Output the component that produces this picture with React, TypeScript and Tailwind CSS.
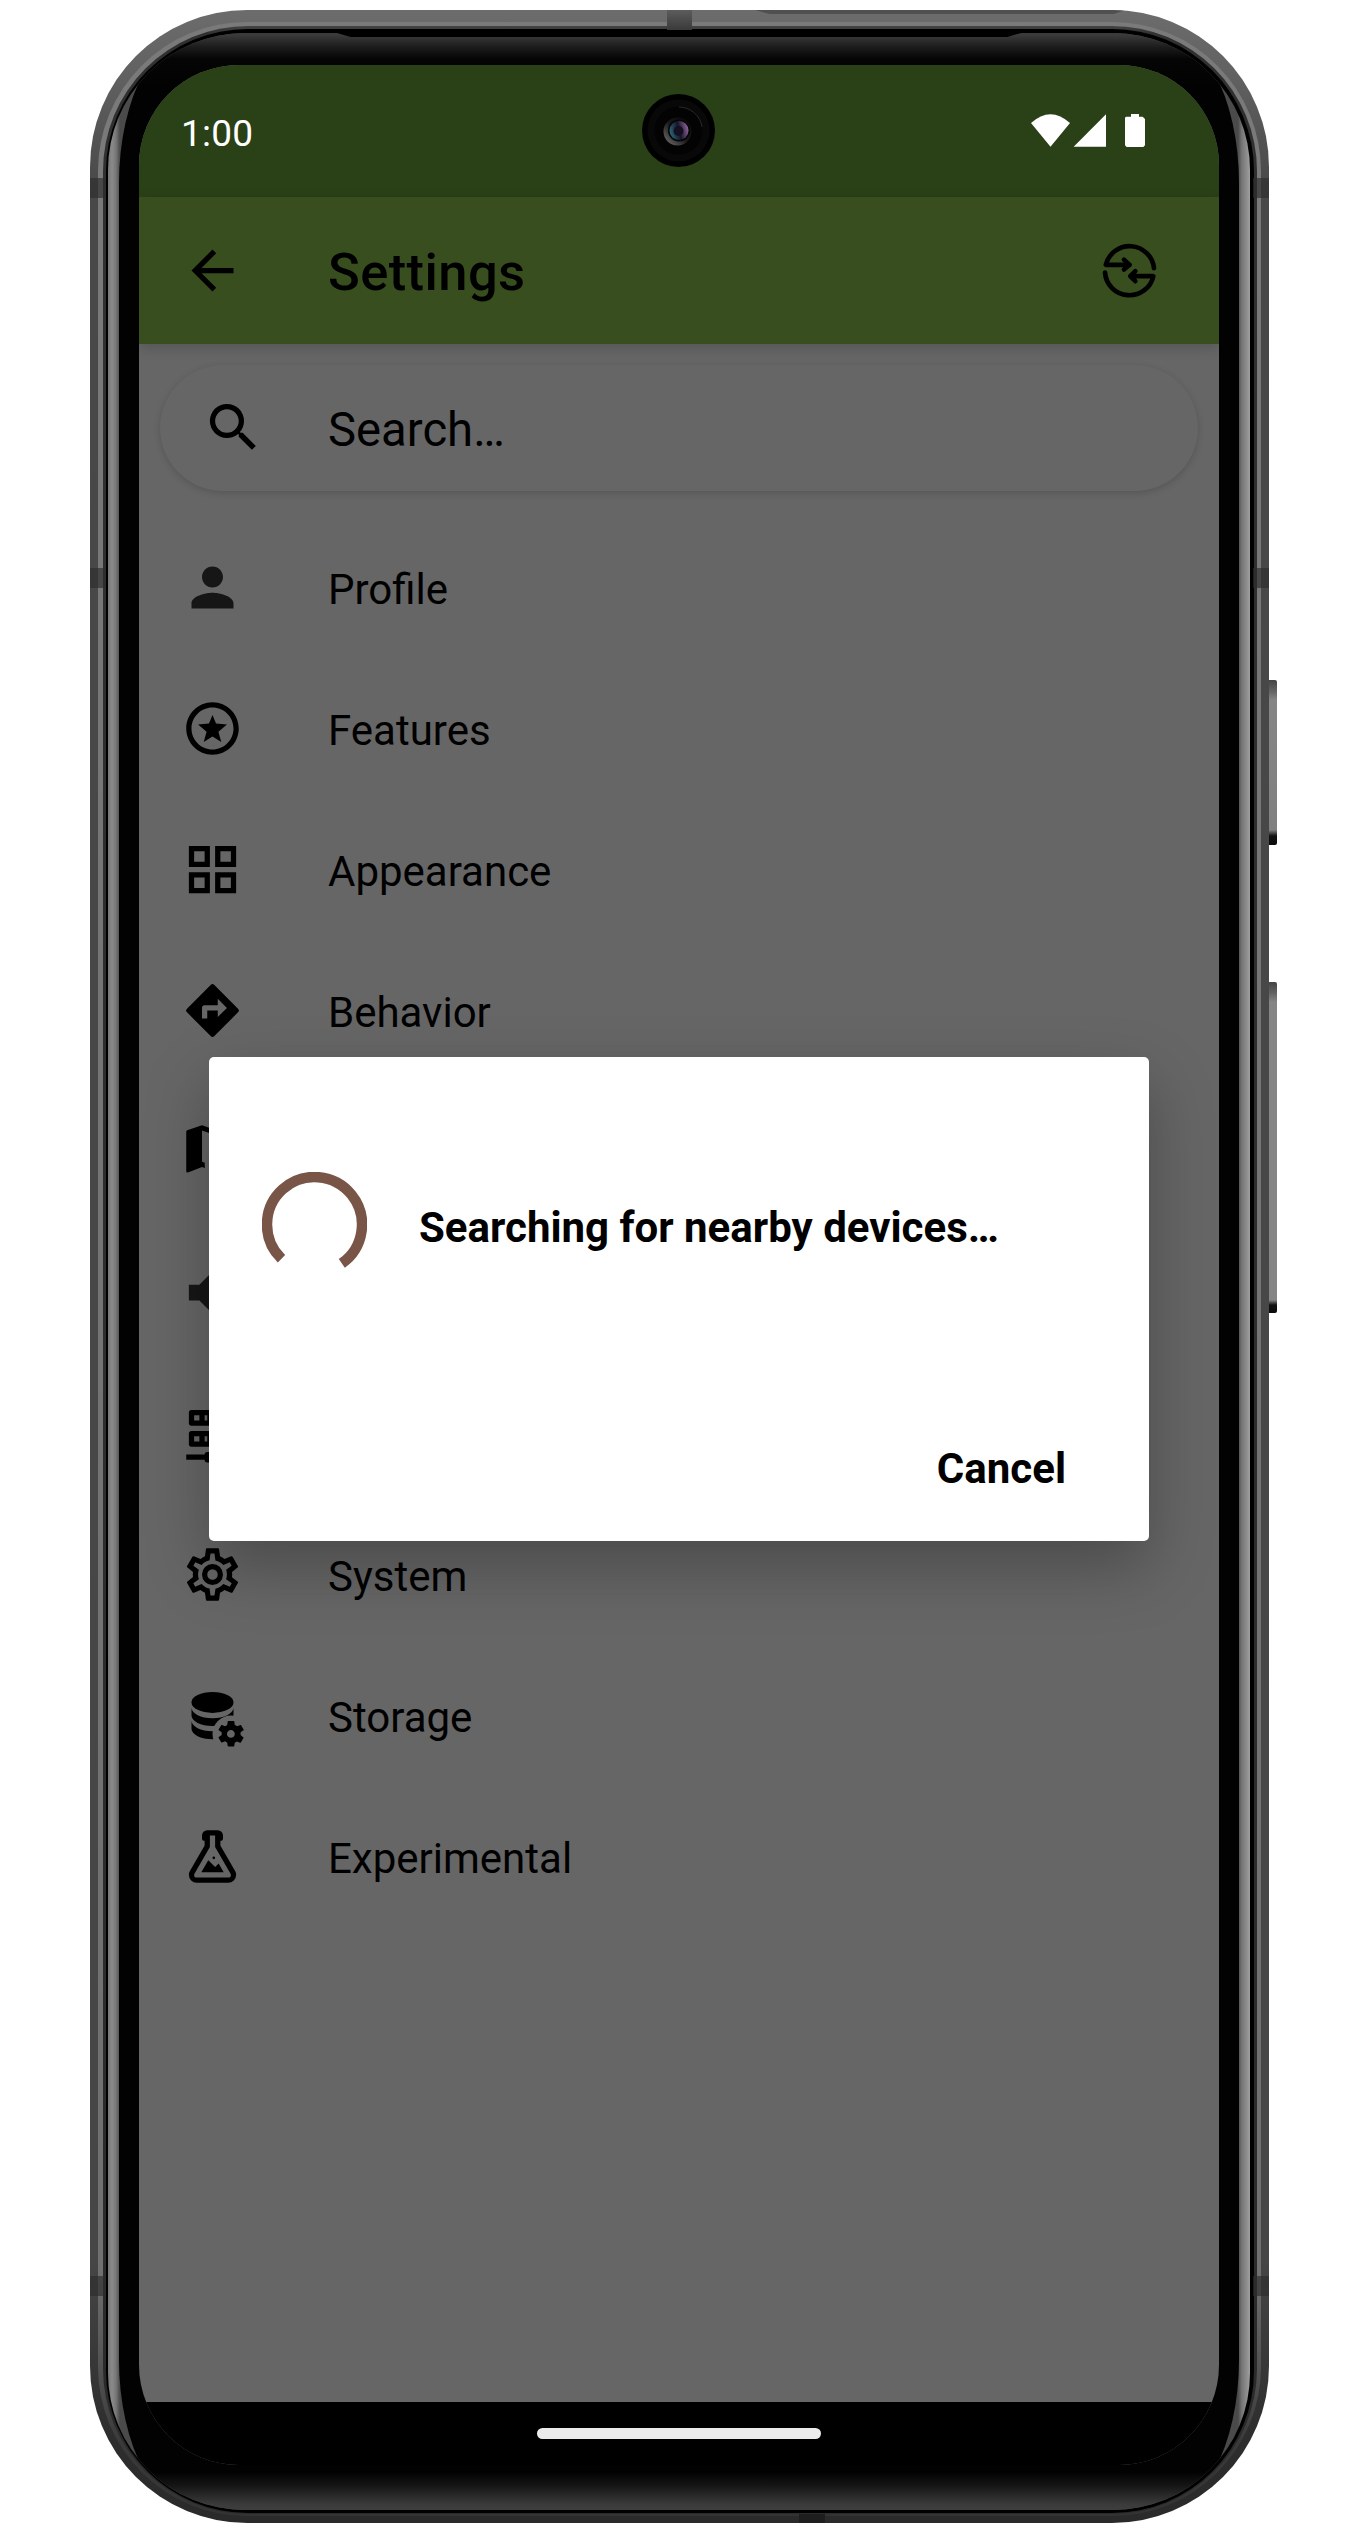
import type { ReactNode } from 'react';
import { MdArrowBack, MdSearch } from 'react-icons/md';

const PERSON = 'M12 12c2.21 0 4-1.79 4-4s-1.79-4-4-4-4 1.79-4 4 1.79 4 4 4zm0 2c-2.67 0-8 1.34-8 4v2h16v-2c0-2.66-5.33-4-8-4z';
const STARS = 'M12 2C6.47 2 2 6.48 2 12s4.47 10 9.99 10C17.52 22 22 17.52 22 12S17.52 2 12 2zm0 18c-4.42 0-8-3.58-8-8s3.58-8 8-8 8 3.58 8 8-3.58 8-8 8zM12 6.900L13.350 10.100L17.500 10.450L14.250 13.200L15.350 17.150L12 15.050L8.650 17.150L9.750 13.200L6.500 10.450L10.650 10.100Z';
const GRID = 'M3 3v8h8V3H3zm6 6H5V5h4v4zM3 13v8h8v-8H3zm6 6H5v-4h4v4zM13 3v8h8V3h-8zm6 6h-4V5h4v4zM13 13v8h8v-8h-8zm6 6h-4v-4h4v4z';
const DIRECTIONS = 'M14 14.5V12h-4v3H8v-4a1 1 0 0 1 1-1h5V7.5l3.5 3.5M21.71 11.29l-9-9a1 1 0 0 0-1.42 0l-9 9a1 1 0 0 0 0 1.42l9 9a1 1 0 0 0 1.42 0l9-9a1 1 0 0 0 0-1.42z';
const MAP = 'M8 2L2.36 3.9C2.15 3.97 2 4.15 2 4.38V19.5a.5.5 0 0 0 .5.5l.16-.03L8 17.9l1.15.4c-.1-.6-.12-1.2-.1-2L8 15.89V4l6 2.11V9l2-.3V5.9l2-.78V8.7h2V2.5a.5.5 0 0 0-.5-.5l-.16.03L14 4.1z';
const SPEAKER = 'M3 9v6h4l5 5V4L7 9H3zm13.5 3A4.5 4.5 0 0 0 14 7.97v8.05c1.48-.73 2.5-2.25 2.5-4.02z';
const SERVER = 'M13 19h1a1 1 0 0 1 1 1h7v2h-7a1 1 0 0 1-1 1h-4a1 1 0 0 1-1-1H2v-2h7a1 1 0 0 1 1-1h1v-2H4a1 1 0 0 1-1-1v-4a1 1 0 0 1 1-1h16a1 1 0 0 1 1 1v4a1 1 0 0 1-1 1h-7v2M4 3h16a1 1 0 0 1 1 1v4a1 1 0 0 1-1 1H4a1 1 0 0 1-1-1V4a1 1 0 0 1 1-1m5 4h1V5H9v2m0 8h1v-2H9v2M5 5v2h2V5H5m0 8v2h2v-2H5z';
const COG = 'M12 8A4 4 0 0 1 16 12A4 4 0 0 1 12 16A4 4 0 0 1 8 12A4 4 0 0 1 12 8M12 10A2 2 0 0 0 10 12A2 2 0 0 0 12 14A2 2 0 0 0 14 12A2 2 0 0 0 12 10M10 22C9.75 22 9.54 21.82 9.5 21.58L9.13 18.93C8.5 18.68 7.96 18.34 7.44 17.94L4.95 18.95C4.73 19.03 4.46 18.95 4.34 18.73L2.34 15.27C2.21 15.05 2.27 14.78 2.46 14.63L4.57 12.97L4.5 12L4.57 11L2.46 9.37C2.27 9.22 2.21 8.95 2.34 8.73L4.34 5.27C4.46 5.05 4.73 4.96 4.95 5.05L7.44 6.05C7.96 5.66 8.5 5.32 9.13 5.07L9.5 2.42C9.54 2.18 9.75 2 10 2H14C14.25 2 14.46 2.18 14.5 2.42L14.87 5.07C15.5 5.32 16.04 5.66 16.56 6.05L19.05 5.05C19.27 4.96 19.54 5.05 19.66 5.27L21.66 8.73C21.79 8.95 21.73 9.22 21.54 9.37L19.43 11L19.5 12L19.43 13L21.54 14.63C21.73 14.78 21.79 15.05 21.66 15.27L19.66 18.73C19.54 18.95 19.27 19.04 19.05 18.95L16.56 17.95C16.04 18.34 15.5 18.68 14.87 18.93L14.5 21.58C14.46 21.82 14.25 22 14 22H10M11.25 4L10.88 6.61C9.68 6.86 8.62 7.5 7.85 8.39L5.44 7.35L4.69 8.65L6.8 10.2C6.4 11.37 6.4 12.64 6.8 13.8L4.68 15.36L5.43 16.66L7.86 15.62C8.63 16.5 9.68 17.14 10.87 17.38L11.24 20H12.76L13.13 17.39C14.32 17.14 15.37 16.5 16.14 15.62L18.57 16.66L19.32 15.36L17.2 13.81C17.6 12.64 17.6 11.37 17.2 10.2L19.31 8.65L18.56 7.35L16.15 8.39C15.38 7.5 14.32 6.86 13.12 6.62L12.75 4H11.25Z';
const SMALL_COG = 'M23.8 20.4C23.9 20.4 23.9 20.5 23.8 20.6L22.8 22.3C22.7 22.4 22.6 22.4 22.5 22.4L21.3 21.9C21 22.1 20.8 22.2 20.5 22.3L20.3 23.6C20.3 23.7 20.2 23.8 20.1 23.8H18.1C18 23.8 17.9 23.7 17.8 23.6L17.6 22.3C17.3 22.2 17 22 16.8 21.8L15.6 22.3C15.5 22.3 15.4 22.3 15.3 22.2L14.3 20.5C14.3 20.4 14.3 20.3 14.4 20.2L15.5 19.4V18.4L14.4 17.6C14.3 17.6 14.3 17.5 14.3 17.4L15.3 15.7C15.4 15.6 15.5 15.6 15.6 15.6L16.8 16.1C17 15.9 17.3 15.8 17.6 15.6L17.8 14.3C17.8 14.2 17.9 14.1 18.1 14.1H20.1C20.2 14.1 20.3 14.2 20.3 14.3L20.5 15.6C20.8 15.7 21.1 15.9 21.4 16.1L22.6 15.6C22.7 15.6 22.9 15.6 22.9 15.7L23.9 17.4C24 17.5 23.9 17.6 23.8 17.6L22.7 18.4V19.4L23.8 20.4M20.5 19C20.5 18.2 19.8 17.5 19 17.5S17.5 18.2 17.5 19 18.2 20.5 19 20.5 20.5 19.8 20.5 19Z';
const FLASK = 'M5 19A1 1 0 0 0 6 20H18A1 1 0 0 0 19 19C19 18.79 18.93 18.59 18.82 18.43L13 8.35V4H11V8.35L5.18 18.43C5.07 18.59 5 18.79 5 19M6 22A3 3 0 0 1 3 19C3 18.4 3.18 17.84 3.5 17.37L9 7.81V6A1 1 0 0 1 8 5V4A2 2 0 0 1 10 2H14A2 2 0 0 1 16 4V5A1 1 0 0 1 15 6V7.81L20.5 17.37C20.82 17.84 21 18.4 21 19A3 3 0 0 1 18 22H6M13 16L14.34 14.66L16.27 18H7.73L10.39 13.39L13 16M12.5 12A.5 .5 0 0 1 13 12.5A.5 .5 0 0 1 12.5 13A.5 .5 0 0 1 12 12.5A.5 .5 0 0 1 12.5 12Z';

function Glyph({ d, soft }: { d: string; soft?: boolean }) {
  return (
    <svg viewBox="0 0 24 24" className={soft ? 'size-[63px] fill-[#161616]' : 'size-[63px] fill-black'}>
      <path fillRule="evenodd" d={d} />
    </svg>
  );
}

function DatabaseCog() {
  return (
    <svg viewBox="0 0 24 24" className="size-[63px] fill-black">
      <mask id="cog-cut" maskUnits="userSpaceOnUse" x="0" y="0" width="24" height="24">
        <rect width="24" height="24" fill="white" />
        <circle cx="19" cy="19" r="7" fill="black" />
      </mask>
      <ellipse cx="12" cy="7" rx="8" ry="4" />
      <g mask="url(#cog-cut)">
        <path d="M4 9c0 2.21 3.58 4 8 4s8-1.79 8-4v3c0 2.21-3.58 4-8 4s-8-1.79-8-4z" />
        <path d="M4 14c0 2.21 3.58 4 8 4s8-1.79 8-4v3c0 2.21-3.58 4-8 4s-8-1.79-8-4z" />
      </g>
      <path fillRule="evenodd" d={SMALL_COG} />
    </svg>
  );
}

function SyncIcon() {
  return (
    <svg viewBox="352 715.5 189 189" className="size-[63px]" fill="none" stroke="black" strokeWidth="14" strokeLinecap="round" strokeLinejoin="round">
      <path d="M520 803A73.5 73.5 0 0 0 375.5 793H446" />
      <path d="M430 777.500L446.500 793L430 807" />
      <path d="M373 816A73.500 73.500 0 0 0 518 827H450" />
      <path d="M464 812L449 827L464 842" />
    </svg>
  );
}

function Row({ icon, label }: { icon: ReactNode; label?: string }) {
  return (
    <li className="flex h-[141px] items-center gap-[84px] pl-[42px]">
      {icon}
      {label && <span className="pt-[5px] text-[42px] leading-none">{label}</span>}
    </li>
  );
}

function StatusBar() {
  return (
    <div className="flex h-[132px] items-center justify-between bg-[#2a4017] pr-[74px] pl-[42px]">
      <span className="pt-[5px] text-[37px] leading-none tracking-[0.2px] text-white">1:00</span>
      <svg viewBox="153 342 342 99" className="-mt-[2px] h-[33px] w-[114px]" fill="white">
        <path d="M153 369Q211.500 316 270 369L211.500 440Z" />
        <path d="M281 440L378 343V440Z" />
        <path d="M453 342H477V350H488L495 357V436L490 441H440L435 436V353L438 350H453Z" />
      </svg>
    </div>
  );
}

function Camera() {
  return (
    <svg viewBox="0 0 73 73" className="absolute top-[29px] left-[503px] size-[73px]">
      <defs>
        <linearGradient id="rim" x1="0" y1="1" x2="1" y2="0">
          <stop offset="0" stopColor="#777" />
          <stop offset="0.5" stopColor="#181818" />
          <stop offset="1" stopColor="#060606" />
        </linearGradient>
        <linearGradient id="lens" x1="0" y1="0.6" x2="1" y2="0.35">
          <stop offset="0" stopColor="#2a6878" />
          <stop offset="0.5" stopColor="#16142a" />
          <stop offset="1" stopColor="#94669e" />
        </linearGradient>
      </defs>
      <circle cx="36.500" cy="36.500" r="36.500" fill="#000" />
      <circle cx="36.500" cy="36.500" r="31" fill="#080808" />
      <circle cx="36.500" cy="36.500" r="24" fill="#030303" />
      <path d="M37 13A23.500 23.500 0 0 1 60 33" fill="none" stroke="#2a2a2a" strokeWidth="1" />
      <circle cx="35.500" cy="37.500" r="14" fill="url(#rim)" />
      <circle cx="37" cy="36.500" r="11" fill="#050505" />
      <circle cx="37" cy="36.500" r="9.500" fill="url(#lens)" />
      <circle cx="36.500" cy="37" r="5" fill="#14101f" />
    </svg>
  );
}

function Dialog() {
  return (
    <div className="absolute top-[992px] left-[70px] flex h-[484px] w-[940px] flex-col justify-between rounded-[5px] bg-white pt-[115px] pr-[83px] pb-[42px] pl-[52.5px] shadow-[0_26px_64px_rgba(0,0,0,0.27)]">
      <div className="flex items-center gap-[52.5px]">
        <svg viewBox="-52.5 -52.5 105 105" className="size-[105px]" fill="none" stroke="#795548" strokeWidth="10.500">
          <path d="M-33 34.200A47.500 47.500 0 1 1 27.300 38.900" />
        </svg>
        <span className="pt-[7px] text-[42px] leading-none font-bold">Searching for nearby devices…</span>
      </div>
      <button className="self-end text-[42px] leading-[60px] font-bold">Cancel</button>
    </div>
  );
}

export default function App() {
  return (
    <div className="h-[2533px] w-[1367px] overflow-hidden bg-white pt-[10px] pl-[90px] font-['Roboto',sans-serif] text-black">
      <div className="relative h-[2513px] w-[1179px]">
        {/* side buttons */}
        <div className="absolute top-[670px] left-[1177px] h-[165px] w-[10px] rounded-r-[2px] bg-[linear-gradient(#444_0,#666_12px,#858585_20px,#808080_150px,#111_156px,#0a0a0a)]" />
        <div className="absolute top-[972px] left-[1177px] h-[331px] w-[10px] rounded-r-[2px] bg-[linear-gradient(#444_0,#666_12px,#858585_20px,#858585_318px,#111_323px,#0a0a0a)]" />

        {/* metal shell */}
        <div className="relative h-full w-full overflow-hidden rounded-[157px] bg-[linear-gradient(#6c6c6c_0,#626262_60px,#484848_180px,#464646_2250px,#2e2e2e_2420px,#2a2a2a)] pt-[12px] pr-[8px] pb-[7px] pl-[8px]">
          <div className="h-full w-full rounded-[149px] bg-[linear-gradient(#7a7a7a_0,#707070_2250px,#3a3a3a_2420px,#333)] pt-[4px] pr-[4px] pb-[2px] pl-[5px]">
            <div className="h-full w-full rounded-[145px] bg-[linear-gradient(#444_0,#303030_8px,#2a2a2a)] pt-[3px] pr-[3px] pb-[1px] pl-[3px]">
              <div className="h-full w-full rounded-[142px] bg-black pt-[4px] pr-[4px] pb-[3px] pl-[2px]">
                {/* glass edge */}
                <div className="relative h-full w-full overflow-hidden rounded-[137px] bg-[linear-gradient(90deg,#777_0,#8a8a8a_4px,#777_8px,#4a4a4a_12px,#4a4a4a_1130px,#777_1134px,#8a8a8a_1138px,#a0a0a0_1142px)]">
                  <div className="-my-[6px] mr-[11px] ml-[11px] h-[calc(100%+12px)] rounded-[84px/156px] bg-[linear-gradient(#3c3c3c_0,#3a3a3a_8px,#1c1c1c_20px,#050505_32px,#020202_60px,#020202_calc(100%-44px),#161616_calc(100%-30px),#3a3a3a_calc(100%-12px),#444)]" />
                </div>
              </div>
            </div>
          </div>

          {/* antenna bands */}
          <div className="absolute top-[168px] left-0 h-[20px] w-[16px] bg-[#2c2c2c]/65" />
          <div className="absolute top-[168px] right-0 h-[20px] w-[16px] bg-[#2c2c2c]/65" />
          <div className="absolute top-[558px] left-0 h-[20px] w-[16px] bg-[#2c2c2c]/65" />
          <div className="absolute top-[558px] right-0 h-[20px] w-[16px] bg-[#2c2c2c]/65" />
          <div className="absolute top-[2266px] left-0 h-[20px] w-[16px] bg-[#2c2c2c]/65" />
          <div className="absolute top-[2266px] right-0 h-[20px] w-[16px] bg-[#2c2c2c]/65" />
          <div className="absolute top-0 left-[577px] h-[20px] w-[25px] bg-[linear-gradient(#5c5c5c,#3a3a3a)]" />
          <div className="absolute bottom-0 left-[709px] h-[9px] w-[26px] bg-[#1e1e1e]" />
          <div className="absolute top-0 left-[665px] h-[4px] w-[370px] bg-[#505050] [clip-path:polygon(0_0,100%_0,97%_100%,4%_100%)]" />
          {/* earpiece slit */}
          <div className="absolute top-[21px] left-[247px] h-[6px] w-[684px] bg-black [clip-path:polygon(0_0,100%_0,100%_33%,98%_100%,2%_100%,0_33%)]" />
        </div>

        {/* display */}
        <main className="absolute top-[55px] left-[49px] flex h-[2400px] w-[1080px] flex-col overflow-hidden rounded-[100px] bg-[#666]">
          <StatusBar />
          <header className="z-10 flex h-[147px] shrink-0 items-center bg-[#384e1e] pr-[58.5px] pl-[42px] shadow-[0_4px_12px_rgba(0,0,0,0.16)]">
            <MdArrowBack className="size-[63px]" />
            <h1 className="ml-[84px] flex-1 pt-[4px] text-[52.5px] leading-none font-medium tracking-[0.4px]">Settings</h1>
            <SyncIcon />
          </header>
          <div className="mx-[21px] mt-[21px] flex h-[126px] shrink-0 items-center rounded-full bg-[#666] pl-[42px] shadow-[0_2px_7px_rgba(0,0,0,0.16)]">
            <MdSearch className="-mt-[2px] size-[63px]" />
            <span className="ml-[63px] pt-[5px] text-[47.25px] leading-none">Search…</span>
          </div>
          <ul className="mt-[26px] flex-1">
            <Row icon={<Glyph d={PERSON} soft />} label="Profile" />
            <Row icon={<Glyph d={STARS} />} label="Features" />
            <Row icon={<Glyph d={GRID} />} label="Appearance" />
            <Row icon={<Glyph d={DIRECTIONS} />} label="Behavior" />
            <Row icon={<Glyph d={MAP} />} />
            <Row icon={<Glyph d={SPEAKER} soft />} />
            <Row icon={<Glyph d={SERVER} />} />
            <Row icon={<Glyph d={COG} />} label="System" />
            <Row icon={<DatabaseCog />} label="Storage" />
            <Row icon={<Glyph d={FLASK} />} label="Experimental" />
          </ul>
          <nav className="flex h-[63px] shrink-0 items-center justify-center bg-black">
            <div className="h-[11px] w-[284px] rounded-full bg-[#ebebeb]" />
          </nav>
          <Camera />
          <div className="absolute inset-0 z-20">
            <Dialog />
          </div>
        </main>
      </div>
    </div>
  );
}
